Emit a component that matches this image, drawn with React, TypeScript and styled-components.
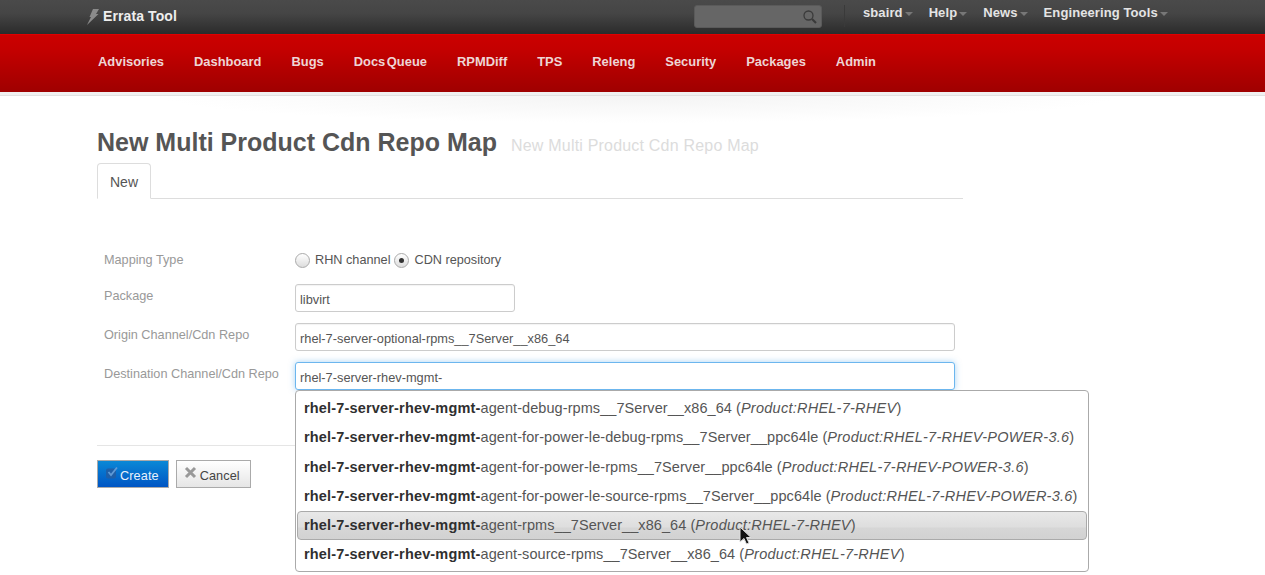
import React from 'react';
import styled, { createGlobalStyle } from 'styled-components';

const Global = createGlobalStyle`
  html, body { margin: 0; padding: 0; background: #fff; }
  body {
    width: 1265px;
    height: 575px;
    overflow: hidden;
    font-family: "Liberation Sans", Arial, sans-serif;
    font-size: 13px;
    color: #555;
  }
`;

const TopBar = styled.div`
  height: 34px;
  background: linear-gradient(#4a4a4a, #454545 40%, #2b2b2b);
  display: flex;
  align-items: flex-start;
  padding-left: 86px;
  box-sizing: border-box;
`;

const Brand = styled.div`
  display: flex;
  align-items: center;
  gap: 3px;
  height: 32px;
  width: 608px;
  color: #eee;
  font-weight: bold;
  font-size: 14px;
  letter-spacing: 0.1px;
`;

const SearchBox = styled.div`
  width: 128px;
  height: 23px;
  margin-top: 5px;
  background: #666;
  border: 1px solid #5a5a5a;
  border-radius: 3px;
  display: flex;
  align-items: center;
  justify-content: flex-end;
  padding-right: 3px;
  box-sizing: border-box;
  margin-right: 22px;
`;

const Divider = styled.div`
  width: 1px;
  height: 22px;
  margin-top: 5px;
  background: #3a3a3a;
  margin-right: 18px;
`;

const UserMenu = styled.div`
  display: flex;
  height: 25px;
  align-items: center;
  gap: 16px;
  color: #e4e4e4;
  font-weight: bold;
  font-size: 13px;
  letter-spacing: 0.1px;
`;

const UserItem = styled.div`
  display: flex;
  align-items: center;
  gap: 2px;
`;

const Caret = styled.span`
  display: inline-block;
  width: 0;
  height: 0;
  margin-top: 3px;
  border-left: 4px solid transparent;
  border-right: 4px solid transparent;
  border-top: 4px solid #777;
`;

const RedBar = styled.div`
  height: 58px;
  background: linear-gradient(#cc0000, #c40000 25%, #9f0000);
  display: flex;
  align-items: center;
  padding-left: 98px;
  padding-bottom: 4px;
  box-sizing: border-box;
  gap: 30px;
  border-top: 1px solid #e00000;
`;

const RedLink = styled.div`
  color: #eed5d5;
  font-weight: bold;
  font-size: 12.92px;
  word-spacing: -2px;
`;

const Shade = styled.div`
  height: 3px;
  background: #f0f0f0;
  border-bottom: 1px solid #e2e2e2;
`;

const ShadeFade = styled.div`
  height: 27px;
  background: radial-gradient(ellipse 480px 27px at 640px 0, #f4f4f4, #fff);
`;

const Main = styled.div`
  width: 866px;
  margin-left: 97px;
  position: relative;
`;

const TitleRow = styled.div`
  display: flex;
  align-items: baseline;
  gap: 14px;
  height: 40px;
`;

const Title = styled.h1`
  margin: 0;
  font-size: 25px;
  line-height: 38px;
  font-weight: bold;
  color: #555;
`;

const Subtitle = styled.span`
  font-size: 16px;
  color: #dcdcdc;
  letter-spacing: 0.2px;
`;

const Tabs = styled.div`
  height: 36px;
  box-sizing: border-box;
  border-bottom: 1px solid #ddd;
  display: flex;
`;

const Tab = styled.div`
  width: 54px;
  height: 36px;
  box-sizing: border-box;
  background: #fff;
  border: 1px solid #ddd;
  border-bottom: 1px solid #fff;
  border-radius: 4px 4px 0 0;
  text-align: center;
  line-height: 37px;
  font-size: 14px;
  color: #555;
`;

const Form = styled.div`
  padding-top: 49px;
  display: flex;
  flex-direction: column;
`;

const Row = styled.div<{ $h: number }>`
  display: flex;
  height: ${(p) => p.$h}px;
  align-items: flex-start;
`;

const Label = styled.div`
  width: 198px;
  padding-left: 7px;
  box-sizing: border-box;
  color: #999;
  font-size: 12.7px;
  line-height: 24px;
`;

const Radios = styled.div`
  display: flex;
  align-items: center;
  height: 24px;
  font-size: 12.7px;
  color: #555;
`;

const Radio = styled.span<{ $on?: boolean }>`
  width: 13px;
  height: 13px;
  border-radius: 50%;
  border: 1px solid #aaa;
  background: linear-gradient(#fff, #ddd);
  margin-right: 5px;
  margin-left: 4px;
  position: relative;
  &:first-child { margin-left: 0; }
  ${(p) =>
    p.$on &&
    `&::after {
      content: '';
      position: absolute;
      left: 4px;
      top: 4px;
      width: 5px;
      height: 5px;
      border-radius: 50%;
      background: #333;
    }`}
`;

const TextBox = styled.div<{ $w: number; $focus?: boolean }>`
  width: ${(p) => p.$w}px;
  height: 28px;
  box-sizing: border-box;
  padding: 3px 4px 0;
  line-height: 24px;
  font-size: 12.8px;
  color: #555;
  background: #fff;
  border-radius: 3px;
  border: 1px solid ${(p) => (p.$focus ? '#6cb6ee' : '#ccc')};
  box-shadow: ${(p) =>
    p.$focus ? '0 0 6px rgba(82,168,236,.5)' : 'inset 0 1px 1px rgba(0,0,0,.05)'};
`;

const Actions = styled.div`
  margin-top: 44px;
  border-top: 1px solid #e5e5e5;
  padding-top: 14px;
  display: flex;
  gap: 7px;
`;

const Button = styled.div<{ $primary?: boolean }>`
  height: 28px;
  box-sizing: border-box;
  border: 1px solid #aaa;
  display: flex;
  align-items: flex-start;
  padding: 5px ${(p) => (p.$primary ? 9 : 10)}px 0 7px;
  font-size: 12.7px;
  gap: 2px;
  color: ${(p) => (p.$primary ? '#e8f2fb' : '#444')};
  background: ${(p) =>
    p.$primary ? 'linear-gradient(#0a88d6, #0055c4)' : 'linear-gradient(#fff, #e6e6e6)'};
`;

const ButtonText = styled.span<{ $gap: number }>`
  padding-top: 3px;
  margin-left: ${(p) => p.$gap}px;
  letter-spacing: 0.1px;
`;

const Dropdown = styled.div`
  position: absolute;
  left: 198px;
  top: 267px;
  width: 794px;
  height: 182px;
  box-sizing: border-box;
  background: #fff;
  border: 1px solid #aaa;
  border-radius: 4px;
  padding: 3px 1px;
`;

const Option = styled.div<{ $active?: boolean }>`
  height: 29.3px;
  line-height: 29px;
  padding-left: 7px;
  box-sizing: border-box;
  font-size: 14.5px;
  letter-spacing: 0.07px;
  color: #555;
  white-space: nowrap;
  border-radius: 4px;
  b { color: #2f2f2f; letter-spacing: 0.17px; }
  i { letter-spacing: 0.25px; }
  ${(p) =>
    p.$active &&
    `background: linear-gradient(#e8e8e8, #dedede 55%, #d6d6d6 60%, #d2d2d2);
     border: 1px solid #aaa;
     padding-left: 6px;
     line-height: 27px;`}
`;

const Pointer = styled.svg`
  position: absolute;
  left: 642px;
  top: 403px;
`;

const options = [
  ['agent-debug-rpms__7Server__x86_64', 'RHEL-7-RHEV'],
  ['agent-for-power-le-debug-rpms__7Server__ppc64le', 'RHEL-7-RHEV-POWER-3.6'],
  ['agent-for-power-le-rpms__7Server__ppc64le', 'RHEL-7-RHEV-POWER-3.6'],
  ['agent-for-power-le-source-rpms__7Server__ppc64le', 'RHEL-7-RHEV-POWER-3.6'],
  ['agent-rpms__7Server__x86_64', 'RHEL-7-RHEV'],
  ['agent-source-rpms__7Server__x86_64', 'RHEL-7-RHEV'],
];

const App = () => (
  <>
    <Global />
    <TopBar>
      <Brand>
        <svg width="14" height="17" viewBox="0 0 14 17">
          <path d="M7 1h6l-3 5h2.500L1 17l4-8H3.500z" fill="#8a8a8a" />
        </svg>
        Errata Tool
      </Brand>
      <SearchBox>
        <svg width="16" height="16" viewBox="0 0 16 16" fill="none" stroke="#3a3a3a">
          <circle cx="6.5" cy="6.5" r="4.5" strokeWidth="1.3" />
          <path d="M10 10l4 4" strokeWidth="2.2" />
        </svg>
      </SearchBox>
      <Divider />
      <UserMenu>
        {['sbaird', 'Help', 'News', 'Engineering Tools'].map((m) => (
          <UserItem key={m}>
            {m}
            <Caret />
          </UserItem>
        ))}
      </UserMenu>
    </TopBar>
    <RedBar>
      {['Advisories', 'Dashboard', 'Bugs', 'Docs Queue', 'RPMDiff', 'TPS', 'Releng', 'Security', 'Packages', 'Admin'].map(
        (n) => (
          <RedLink key={n}>{n}</RedLink>
        ),
      )}
    </RedBar>
    <Shade />
    <ShadeFade />
    <Main>
      <TitleRow>
        <Title>New Multi Product Cdn Repo Map</Title>
        <Subtitle>New Multi Product Cdn Repo Map</Subtitle>
      </TitleRow>
      <Tabs>
        <Tab>New</Tab>
      </Tabs>
      <Form>
        <Row $h={36}>
          <Label>Mapping Type</Label>
          <Radios>
            <Radio />
            RHN channel
            <Radio $on />
            CDN repository
          </Radios>
        </Row>
        <Row $h={39}>
          <Label>Package</Label>
          <TextBox $w={220}>libvirt</TextBox>
        </Row>
        <Row $h={39}>
          <Label>Origin Channel/Cdn Repo</Label>
          <TextBox $w={660}>rhel-7-server-optional-rpms__7Server__x86_64</TextBox>
        </Row>
        <Row $h={39}>
          <Label>Destination Channel/Cdn Repo</Label>
          <TextBox $w={660} $focus>
            rhel-7-server-rhev-mgmt-
          </TextBox>
        </Row>
      </Form>
      <Actions>
        <Button $primary>
          <svg width="14" height="14" viewBox="0 0 14 14" fill="none">
            <rect x="1" y="2.500" width="10" height="10" rx="2" fill="#1f5fa8" />
            <path d="M3.500 6l2.500 3 6-7.500" stroke="#5f9ad6" strokeWidth="1.8" />
          </svg>
          <ButtonText $gap={-1}>Create</ButtonText>
        </Button>
        <Button>
          <svg width="13" height="13" viewBox="0 0 13 13" fill="none" stroke="#999" strokeWidth="3">
            <path d="M2 2l9 9M11 2l-9 9" />
          </svg>
          <ButtonText $gap={1}>Cancel</ButtonText>
        </Button>
      </Actions>
      <Dropdown>
        {options.map(([rest, product], i) => (
          <Option key={rest} $active={i === 4}>
            <b>rhel-7-server-rhev-mgmt-</b>
            {rest} (<i>Product:{product}</i>)
          </Option>
        ))}
      </Dropdown>
      <Pointer width="13" height="19" viewBox="0 0 13 19">
        <path d="M1 1v15l4-3.500 2.500 5.500 2.500-1-2.500-5.500H12z" fill="#111" stroke="#ddd" strokeWidth="1" />
      </Pointer>
    </Main>
  </>
);

export default App;
